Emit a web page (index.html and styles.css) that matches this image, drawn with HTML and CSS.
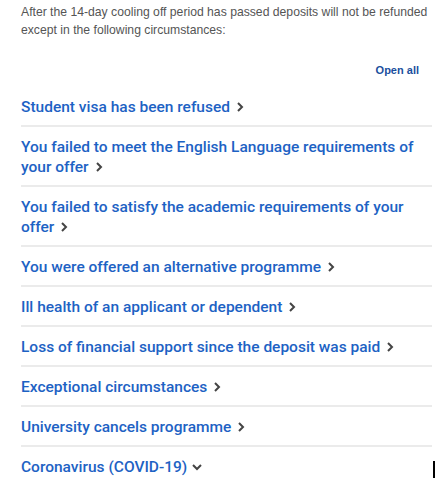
FILE: index.html
```html
<!DOCTYPE html>
<html lang="en">
<head>
<meta charset="utf-8">
<link rel="stylesheet" href="styles.css">
</head>
<body>
<div class="page">
  <p class="intro">After the 14-day cooling off period has passed deposits will not be refunded except in the following circumstances:</p>
  <div class="toolbar"><a class="open-all">Open all</a></div>
  <ul class="accordion">
    <li class="item"><span class="title">Student visa has been refused<svg class="chev" viewBox="0 0 8 12"><path d="M2 2l4 4-4 4"/></svg></span></li>
    <li class="item"><span class="title">You failed to meet the English Language requirements of your offer<svg class="chev" viewBox="0 0 8 12"><path d="M2 2l4 4-4 4"/></svg></span></li>
    <li class="item"><span class="title">You failed to satisfy the academic requirements of your offer<svg class="chev" viewBox="0 0 8 12"><path d="M2 2l4 4-4 4"/></svg></span></li>
    <li class="item"><span class="title">You were offered an alternative programme<svg class="chev" viewBox="0 0 8 12"><path d="M2 2l4 4-4 4"/></svg></span></li>
    <li class="item"><span class="title">Ill health of an applicant or dependent<svg class="chev" viewBox="0 0 8 12"><path d="M2 2l4 4-4 4"/></svg></span></li>
    <li class="item"><span class="title">Loss of financial support since the deposit was paid<svg class="chev" viewBox="0 0 8 12"><path d="M2 2l4 4-4 4"/></svg></span></li>
    <li class="item"><span class="title">Exceptional circumstances<svg class="chev" viewBox="0 0 8 12"><path d="M2 2l4 4-4 4"/></svg></span></li>
    <li class="item"><span class="title">University cancels programme<svg class="chev" viewBox="0 0 8 12"><path d="M2 2l4 4-4 4"/></svg></span></li>
    <li class="item last"><span class="title">Coronavirus (COVID-19)<svg class="chev down" viewBox="0 0 12 8"><path d="M2 2l4 4 4-4"/></svg></span><span class="cursor"></span></li>
  </ul>
</div>
</body>
</html>
```
FILE: styles.css
```css
html, body {
  margin: 0;
  padding: 0;
  background: #fff;
}
.page {
  position: relative;
  padding: 0 11px 0 21px;
  font-family: "Liberation Sans", Arial, sans-serif;
}
.intro {
  margin: 3px 0 0;
  font-size: 12.2px;
  line-height: 18px;
  color: #555;
}
.toolbar {
  display: flex;
  justify-content: flex-end;
  padding: 24px 13px 0 0;
  height: 24px;
}
.open-all {
  font-size: 11px;
  font-weight: bold;
  color: #1b4f9e;
  line-height: 14px;
}
.accordion {
  list-style: none;
  margin: 0;
  padding: 0;
}
.item {
  position: relative;
  padding: 10px 0 8px;
  border-bottom: 2px solid #ebebeb;
  font-family: Roboto, "Liberation Sans", Arial, sans-serif;
  font-size: 15.5px;
  line-height: 20px;
  font-weight: 500;
  color: #1d62c4;
}
.item.last {
  border-bottom: none;
}
.title {
  padding-right: 20px;
}
.chev {
  width: 8px;
  height: 12px;
  margin-left: 6px;
  vertical-align: -1px;
  fill: none;
  stroke: #444;
  stroke-width: 2;
}
.chev.down {
  width: 12px;
  height: 8px;
  margin-left: 4px;
  vertical-align: 1px;
}
.cursor {
  position: absolute;
  right: -3px;
  top: 14px;
  width: 2px;
  height: 17px;
  background: #000;
}
```
